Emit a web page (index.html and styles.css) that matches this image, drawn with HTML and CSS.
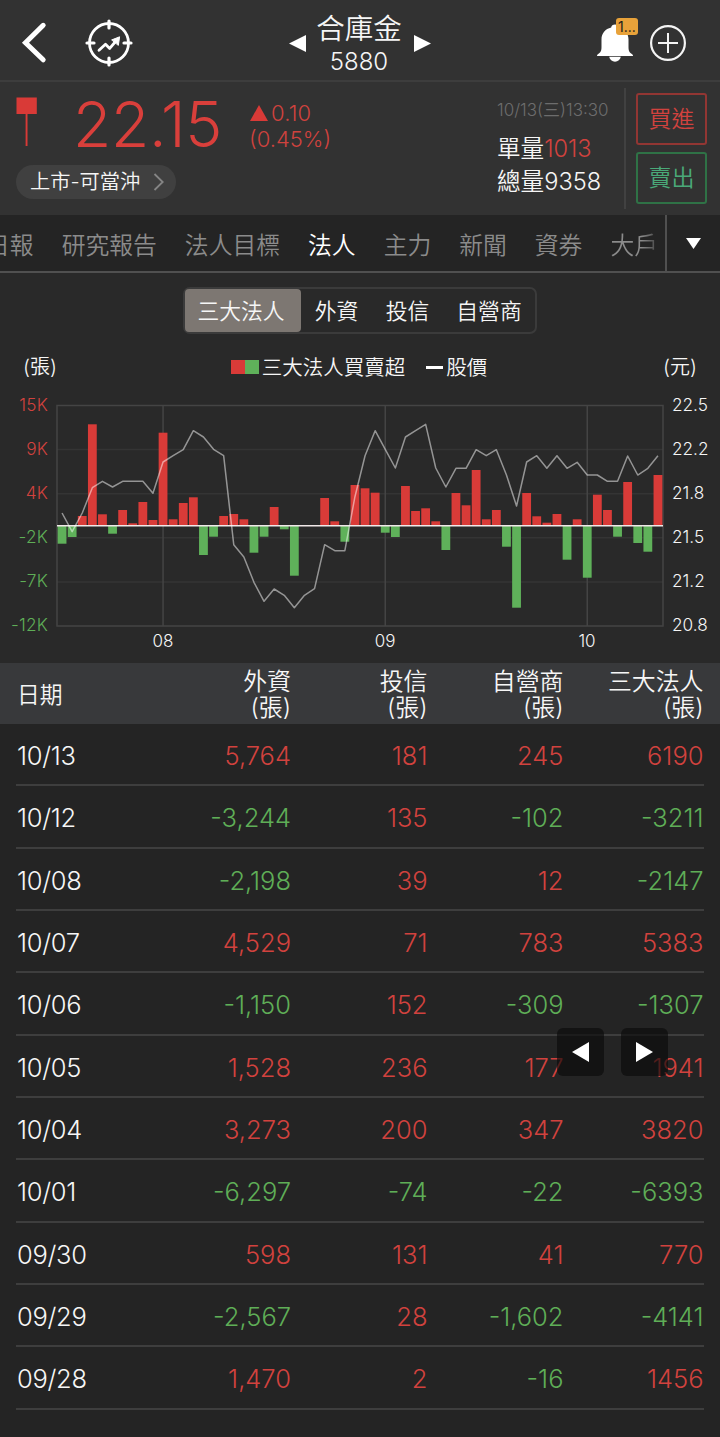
FILE: index.html
```html
<!DOCTYPE html>
<html lang="zh-Hant">
<head>
<meta charset="utf-8">
<title>合庫金 5880</title>
<link rel="stylesheet" href="styles.css">
</head>
<body>
<header class="topbar">
  <div class="topbar-left">
    <svg class="back" width="30" height="44" viewBox="0 0 30 44"><path d="M26.200 4.300L8.500 21.800L26.200 38.800" fill="none" stroke="#fff" stroke-width="5" stroke-linecap="round" stroke-linejoin="miter"/></svg>
    <svg class="target" width="48" height="48" viewBox="0 0 48 48" fill="none" stroke="#fff" stroke-width="2.8" stroke-linecap="round">
      <circle cx="24" cy="24" r="19.5"/>
      <path d="M24 2v7M24 39v7M2 24h7M39 24h7" stroke-width="3.2"/>
      <path d="M14 31.2l6.500-6 4.200 4.200 6.300-7.400" stroke-width="2.8" stroke-linejoin="round"/>
      <path d="M27 20.800l7.600-3-1.200 8.200z" fill="#fff" stroke-width="1"/>
    </svg>
  </div>
  <div class="title">
    <svg width="17" height="17" viewBox="0 0 17 17"><path d="M0 8.500L17 0v17z" fill="#fff"/></svg>
    <div class="title-text"><div class="name">合庫金</div><div class="code">5880</div></div>
    <svg width="17" height="17" viewBox="0 0 17 17"><path d="M17 8.500L0 0v17z" fill="#fff"/></svg>
  </div>
  <div class="topbar-right">
    <div class="bell">
      <svg width="38" height="40" viewBox="0 0 38 40" fill="#fff"><path d="M19 1.500c-2.100 0-3.700 1.300-3.800 3C9.200 5.900 5.500 10.500 5.500 16.500v7.500c0 4.500-1.200 5.500-3 6.700-1 .6-1.500 1-1.500 2.300h36c0-1.300-.5-1.700-1.500-2.300-1.800-1.200-3-2.200-3-6.700v-7.500c0-6-3.700-10.600-9.700-12-.1-1.700-1.700-3-3.800-3z"/><path d="M13.200 33.800h11.600c-.5 3-2.900 4.900-5.800 4.900s-5.300-1.900-5.800-4.900z"/></svg>
      <span class="badge">1...</span>
    </div>
    <svg width="38" height="38" viewBox="0 0 38 38" fill="none" stroke="#f4f4f4" stroke-width="2.200"><circle cx="19" cy="19" r="16.900"/><path d="M19 9v20M9 19h20" stroke-width="2"/></svg>
  </div>
</header>

<section class="quote">
  <div class="quote-main">
    <div class="price-row">
      <svg class="candle" width="22" height="50" viewBox="0 0 22 50" fill="#d93a37"><path d="M.5 .5h20.300v16.500H.5zM9.600 17h1.900v32H9.600z"/></svg>
      <div class="price">22.15</div>
      <div class="change">
        <div><svg width="18" height="16" viewBox="0 0 18 16"><path d="M9 0l9 16H0z" fill="#d93a37"/></svg>0.10</div>
        <div class="pct">(0.45%)</div>
      </div>
    </div>
    <div class="market"><span>上市-可當沖</span><svg width="12" height="20" viewBox="0 0 12 20"><path d="M1.500 2l8.200 8-8.200 8" fill="none" stroke="#858585" stroke-width="1.800"/></svg></div>
  </div>
  <div class="volume">
    <div class="time">10/13(三)13:30</div>
    <div>單量<span class="up">1013</span></div>
    <div>總量<span>9358</span></div>
  </div>
  <div class="orders"><div class="order buy">買進</div><div class="order sell">賣出</div></div>
</section>

<nav class="tabs">
  <div class="tab-list"><span>日報</span><span>研究報告</span><span>法人目標</span><span class="active">法人</span><span>主力</span><span>新聞</span><span>資券</span><span>大戶</span></div>
  <div class="tab-more"><svg width="15" height="11" viewBox="0 0 15 11"><path d="M0 0h15L7.500 11z" fill="#fff"/></svg></div>
</nav>

<section class="panel">
  <div class="segments"><span class="seg selected">三大法人</span><span class="seg">外資</span><span class="seg">投信</span><span class="seg wide">自營商</span></div>
  <div class="legend">
    <span class="unit">(張)</span>
    <div class="keys"><i class="key red"></i><i class="key green"></i><span>三大法人買賣超</span><i class="dash"></i><span>股價</span></div>
    <span class="unit">(元)</span>
  </div>
  <div class="chart">
    <div class="axis left"><span class="up">15K</span><span class="up">9K</span><span class="up">4K</span><span class="down">-2K</span><span class="down">-7K</span><span class="down">-12K</span></div>
    <div class="plot">
      <svg id="plot" width="608" height="240" viewBox="56 395 608 240"></svg>
      <div class="months"><span>08</span><span>09</span><span>10</span></div>
    </div>
    <div class="axis right"><span>22.5</span><span>22.2</span><span>21.8</span><span>21.5</span><span>21.2</span><span>20.8</span></div>
  </div>
</section>

<main class="table">
  <div class="thead"><span>日期</span><span>外資<br>(張)</span><span>投信<br>(張)</span><span>自營商<br>(張)</span><span>三大法人<br>(張)</span></div>
  <div class="row"><span>10/13</span><span class="up">5,764</span><span class="up">181</span><span class="up">245</span><span class="up">6190</span></div>
  <div class="row"><span>10/12</span><span class="down">-3,244</span><span class="up">135</span><span class="down">-102</span><span class="down">-3211</span></div>
  <div class="row"><span>10/08</span><span class="down">-2,198</span><span class="up">39</span><span class="up">12</span><span class="down">-2147</span></div>
  <div class="row"><span>10/07</span><span class="up">4,529</span><span class="up">71</span><span class="up">783</span><span class="up">5383</span></div>
  <div class="row"><span>10/06</span><span class="down">-1,150</span><span class="up">152</span><span class="down">-309</span><span class="down">-1307</span></div>
  <div class="row"><span>10/05</span><span class="up">1,528</span><span class="up">236</span><span class="up">177</span><span class="up">1941</span></div>
  <div class="row"><span>10/04</span><span class="up">3,273</span><span class="up">200</span><span class="up">347</span><span class="up">3820</span></div>
  <div class="row"><span>10/01</span><span class="down">-6,297</span><span class="down">-74</span><span class="down">-22</span><span class="down">-6393</span></div>
  <div class="row"><span>09/30</span><span class="up">598</span><span class="up">131</span><span class="up">41</span><span class="up">770</span></div>
  <div class="row"><span>09/29</span><span class="down">-2,567</span><span class="up">28</span><span class="down">-1,602</span><span class="down">-4141</span></div>
  <div class="row"><span>09/28</span><span class="up">1,470</span><span class="up">2</span><span class="down">-16</span><span class="up">1456</span></div>
</main>

<div class="pager">
  <div class="pager-btn"><svg width="17" height="20" viewBox="0 0 17 20"><path d="M0 10L17 0v20z" fill="#fff"/></svg></div>
  <div class="pager-btn"><svg width="17" height="20" viewBox="0 0 17 20"><path d="M17 10L0 0v20z" fill="#fff"/></svg></div>
</div>
<script src="chart.js"></script>
</body>
</html>
```

FILE: styles.css
```css
* { box-sizing: border-box; }
body {
  margin: 0;
  width: 720px;
  height: 1437px;
  overflow: hidden;
  position: relative;
  background: #242424;
  color: #f6f6f6;
  font-family: Inter, "Noto Sans CJK TC", sans-serif;
  font-weight: 350;
}
svg { display: block; flex: none; }
.up { color: #d1423e; }
.down { color: #5fae57; }

.topbar {
  height: 82px;
  background: #323232;
  border-bottom: 2px solid #3d3d3d;
  display: grid;
  grid-template-columns: 1fr 142px 1fr;
  align-items: center;
}
.topbar-left { display: flex; align-items: center; padding: 5px 0 0 17px; }
.target { margin-left: 38px; }
.title { display: flex; align-items: center; justify-content: space-between; padding-top: 7px; }
.title-text { text-align: center; margin-left: -2px; padding-top: 1px; }
.name { font-size: 28.500px; line-height: 34px; }
.code { font-size: 24px; line-height: 31px; letter-spacing: 0; }
.topbar-right { display: flex; align-items: center; justify-content: flex-end; gap: 15px; padding: 6px 33px 0 0; }
.bell { position: relative; }
.badge {
  position: absolute; left: 20px; top: -5px;
  width: 22px; height: 17px; border-radius: 3px;
  background: #e8a23a; color: #1c1c1c;
  font-size: 14px; line-height: 18px; text-align: center; font-weight: 400;
}

.quote { height: 133px; background: #323232; display: flex; }
.quote-main { width: 497px; padding: 15px 0 0 16px; }
.price-row { display: flex; height: 68px; }
.price { margin-left: 35px; width: 177px; font-size: 62.500px; line-height: 54px; letter-spacing: -0.3px; color: #d93f3b; }
.change { color: #cf423e; font-size: 22px; line-height: 26px; padding-top: 3px; }
.change div { display: flex; align-items: center; gap: 3px; letter-spacing: 0.2px; }
.change .pct { letter-spacing: 0; margin-left: -1px; }
.market {
  width: 160px; height: 34px; border-radius: 17px; background: #404040;
  display: flex; align-items: center; justify-content: space-between; padding: 0 11px 0 14px;
  font-size: 20.200px; line-height: 30px;
}
.market span { padding-bottom: 1px; }
.volume { width: 129px; border-right: 2px solid #414141; margin: 6px 0; padding-top: 11px; font-size: 23.600px; line-height: 33px; white-space: nowrap; }
.time { font-size: 17px; line-height: 22px; color: #6d6d6d; margin-bottom: 11px; }
.orders { padding: 11px 0 0 10px; display: flex; flex-direction: column; gap: 7px; }
.order { width: 71px; height: 52px; border: 2px solid; border-radius: 3px; font-size: 23px; line-height: 49px; text-align: center; }
.buy { border-color: #923633; color: #d1423e; }
.sell { border-color: #2f7246; color: #4aa979; }

.tabs { height: 58px; border-bottom: 2px solid #505050; display: flex; background: #242424; }
.tab-list {
  width: 665px; overflow: hidden; display: flex; justify-content: flex-end; gap: 28px;
  padding-right: 7px; font-size: 23.800px; line-height: 61px; color: #8b8b8b; white-space: nowrap;
}
.tab-list span { flex: none; }
.tab-list .active { color: #fff; }
.tab-list span:last-child { background: linear-gradient(90deg, #8b8b8b 65%, #444 100%); -webkit-background-clip: text; background-clip: text; color: transparent; }
.tab-more { flex: 1; border-left: 2px solid #505050; display: flex; align-items: center; justify-content: center; padding-top: 1px; }

.panel { height: 390px; background: #292929; padding-top: 14px; }
.segments {
  width: 354px; height: 47px; margin: 0 0 0 183px; border: 2px solid #3b3b3b; border-radius: 7px;
  display: flex; font-size: 21.800px; line-height: 44px; text-align: center;
}
.seg { width: 71px; }
.selected { width: 116px; background: #7d7772; border-radius: 4px; padding-right: 4px; }
.wide { flex: 1; }
.legend { display: flex; justify-content: space-between; padding: 0 23px; height: 40px; line-height: 41px; margin-top: 13px; font-size: 20.500px; }
.legend .unit { font-size: 20px; }
.keys { display: flex; align-items: center; margin-left: -2px; }
.key { width: 14px; height: 14px; }
.red { background: #d93b38; }
.green { background: #5fb15a; }
.key + span { margin-left: 3px; }
.dash { width: 17px; height: 3px; background: #fff; margin: 0 3px 0 21px; }
.chart { display: flex; margin-top: 8px; }
.axis { height: 240px; display: flex; flex-direction: column; justify-content: space-between; font-size: 17.200px; line-height: 20px; }
.left { width: 48px; text-align: right; margin-right: 8px; letter-spacing: 0.2px; }
.right { margin-left: 8px; }
.plot { width: 608px; height: 256px; }
.months { display: grid; grid-template-columns: 214px 230px 174px; margin: -4px 0 0; font-size: 17px; line-height: 20px; text-align: center; }

.thead, .row { display: grid; grid-template-columns: 108px 166px 136.500px 136px 140px; text-align: right; align-items: center; }
.thead { height: 61px; padding: 2px 16px 0 17px; background: #38393b; font-size: 23.900px; line-height: 26px; }
.thead span:first-child { font-size: 22.800px; }
.thead span:first-child, .row span:first-child { text-align: left; color: #f6f6f6; }
.row { height: 62.330px; margin: 0 16px; padding: 3px 0 0 1px; border-bottom: 2px solid #3e3e3e; font-size: 25.500px; }
.row span:first-child { letter-spacing: -0.3px; }

.pager { position: absolute; left: 557px; top: 1028px; display: flex; gap: 17px; }
.pager-btn { width: 47px; height: 48px; border-radius: 6px; background: rgba(10, 10, 10, 0.64); display: flex; align-items: center; justify-content: center; }
```

FILE: chart.js
```js
const LEFT = 57, RIGHT = 663, TOP = 405.5, BOTTOM = 626, ZERO = 525.7;
// Bar ends and price points, one per trading day, on the plot's vertical scale.
const bars = [543.7,537,516,424.3,514.3,533.7,510,523.3,502,520,432.7,519.3,503,497.3,555,536.7,516,514,519.3,552.7,536.7,507,529.3,575.7,null,null,498,521.3,541.7,485,488.3,492.7,532.7,537,486,511,508.3,521.3,550,493,505.3,470,519.3,510,546.7,607.7,493,516.3,522.7,514,559.7,519.3,577.7,494.7,510,536.7,482,543,551.7,475];
const price = [513,531.7,513,487.7,481.3,487,481.3,481.3,481.3,493.3,462,455.7,449.7,430.7,437,449.3,455.7,544.7,557,582.3,601.3,589,595.3,607.7,595.3,588.7,544.7,550.7,550.7,496.7,455.7,430.7,449.3,468,437,430.7,424.3,468,487,468.3,468.3,449.7,455.7,449.7,475,506,462,455.7,468.3,455.7,468.3,462.3,475,475,481.3,481.3,456,475,468.3,455.7];
const step = (RIGHT - LEFT) / bars.length;
const x = i => LEFT + (i + 0.5) * step;
let out = '';
for (let k = 1; k < 5; k++) {
  const y = TOP + (BOTTOM - TOP) * k / 5;
  out += `<path d="M${LEFT} ${y}H${RIGHT}" stroke="#343434" stroke-width="1.5"/>`;
}
[10, 32, 52].forEach(i => { out += `<path d="M${x(i)} ${TOP}V${BOTTOM}" stroke="#444" stroke-width="1.5"/>`; });
out += `<rect x="${LEFT}" y="${TOP}" width="${RIGHT - LEFT}" height="${BOTTOM - TOP}" fill="none" stroke="#444" stroke-width="1.5"/>`;
bars.forEach((y, i) => {
  if (y === null) return;
  out += `<rect x="${x(i) - 4.4}" y="${Math.min(y, ZERO)}" width="8.8" height="${Math.abs(y - ZERO)}" fill="${y < ZERO ? '#d93b38' : '#5fb15a'}"/>`;
});
out += `<path d="M${LEFT} ${ZERO}H${RIGHT}" stroke="#f0e8e8" stroke-width="1.5"/>`;
out += `<polyline points="${price.map((y, i) => x(i) + ',' + y).join(' ')}" fill="none" stroke="#fff" stroke-opacity=".5" stroke-width="1.5" stroke-linejoin="round"/>`;
document.getElementById('plot').innerHTML = out;
```
